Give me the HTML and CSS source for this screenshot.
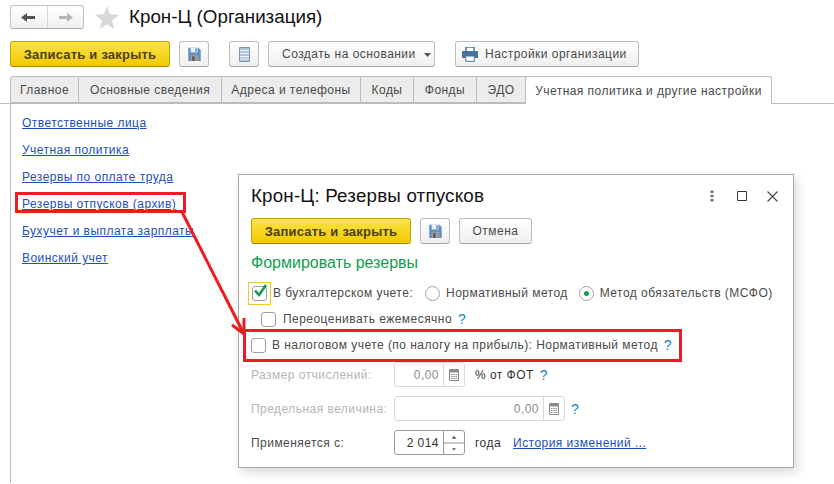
FILE: index.html
```html
<!DOCTYPE html>
<html lang="ru">
<head>
<meta charset="utf-8">
<title>Крон-Ц (Организация)</title>
<link rel="stylesheet" href="styles.css">
</head>
<body>
<svg width="0" height="0" class="defs">
  <symbol id="save" viewBox="0 0 16 18">
    <path d="M0 1h13l3 3v14H0z" fill="#5d8fc4"/>
    <path d="M3 1h9v6H3z" fill="#e9f1f8"/>
    <path d="M9 2h2v4H9z" fill="#5d8fc4"/>
    <path d="M3 10h10v8H3z" fill="#9a9a9a"/>
    <path d="M5 12h3v6H5z" fill="#555"/>
  </symbol>
  <symbol id="calc" viewBox="0 0 10 12">
    <path d="M.5.5h9v11h-9z" fill="#fff" stroke="#8a8a8a"/>
    <path d="M1 1h8v2.500H1z" fill="#8a8a8a"/>
    <path d="M2 5h1.500v1H2zM4.300 5h1.500v1H4.300zM6.600 5h1.500v1H6.600zM2 7h1.500v1H2zM4.300 7h1.500v1H4.300zM6.600 7h1.500v1H6.600zM2 9h1.500v1H2zM4.300 9h1.500v1H4.300zM6.600 9h1.500v1H6.600z" fill="#8a8a8a"/>
  </symbol>
</svg>

<div class="head">
  <div class="nav">
    <span class="nav-btn">
      <svg width="15" height="11" viewBox="0 0 15 11"><path d="M0 5.500 6 1v3h8v3H6v3z" fill="#555"/></svg>
    </span>
    <span class="nav-btn">
      <svg width="15" height="11" viewBox="0 0 15 11"><path d="M15 5.500 9 1v3H1v3h8v3z" fill="#b5b5b5"/></svg>
    </span>
  </div>
  <svg class="star" width="24" height="23" viewBox="0 0 24 23"><path d="m12 0 3.200 8.300 8.800.5-6.900 5.600 2.300 8.600L12 18.200 4.600 23l2.300-8.600L0 8.800l8.800-.5z" fill="#d8d8d8"/></svg>
  <h1 class="title">Крон-Ц (Организация)</h1>
</div>

<div class="toolbar">
  <button class="btn btn-primary btn-wide">Записать и закрыть</button>
  <button class="btn btn-icon"><svg width="13" height="14"><use href="#save"/></svg></button>
  <button class="btn btn-icon btn-list">
    <svg width="11" height="15" viewBox="0 0 11 15"><path d="M.5.500h10v14H.5z" fill="#a9c4dc" stroke="#7b97b0"/><path d="M1 3.500h9M1 6.500h9M1 9.500h9M1 12h9" stroke="#f2f6fa"/></svg>
  </button>
  <button class="btn btn-create">Создать на основании<svg class="caret" width="7" height="4" viewBox="0 0 7 4"><path d="M0 0h7L3.500 4z" fill="#555"/></svg></button>
  <button class="btn btn-settings">
    <svg width="16" height="15" viewBox="0 0 16 15"><path d="M4 0h8v5H4z" fill="#fff" stroke="#46749f" stroke-width="1.500"/><path d="M1 4h14a1 1 0 0 1 1 1v6h-3V9H3v2H0V5a1 1 0 0 1 1-1z" fill="#46749f"/><path d="M3.700 9h8.600v5.300H3.700z" fill="#fff" stroke="#46749f"/></svg>
    Настройки организации
  </button>
</div>

<div class="tabs">
  <span class="tab tab-1">Главное</span>
  <span class="tab tab-2">Основные сведения</span>
  <span class="tab tab-3">Адреса и телефоны</span>
  <span class="tab tab-4">Коды</span>
  <span class="tab tab-5">Фонды</span>
  <span class="tab tab-6">ЭДО</span>
  <span class="tab tab-active">Учетная политика и другие настройки</span>
</div>

<main class="panel">
  <a class="link side-link" href="#">Ответственные лица</a>
  <a class="link side-link" href="#">Учетная политика</a>
  <a class="link side-link" href="#">Резервы по оплате труда</a>
  <a class="link side-link" href="#">Резервы отпусков (архив)</a>
  <a class="link side-link" href="#">Бухучет и выплата зарплаты</a>
  <a class="link side-link" href="#">Воинский учет</a>
</main>

<section class="dialog">
  <div class="dialog-head">
    <h2 class="dialog-title">Крон-Ц: Резервы отпусков</h2>
    <svg class="win-more" width="4" height="12" viewBox="0 0 4 12"><path d="M.5.500h3v2.500h-3zM.5 4.800h3v2.500h-3zM.5 9h3v2.500h-3z" fill="#707070"/></svg>
    <svg class="win-max" width="10" height="10" viewBox="0 0 10 10"><path d="M.5.500h9v9h-9z" fill="none" stroke="#333"/></svg>
    <svg class="win-close" width="11" height="11" viewBox="0 0 11 11"><path d="m.5.500 10 10m0-10-10 10" fill="none" stroke="#444" stroke-width="1.100"/></svg>
  </div>
  <div class="dialog-tools">
    <button class="btn btn-primary btn-wide">Записать и закрыть</button>
    <button class="btn btn-icon"><svg width="13" height="14"><use href="#save"/></svg></button>
    <button class="btn btn-cancel">Отмена</button>
  </div>
  <div class="section-title">Формировать резервы</div>

  <div class="row row-acc">
    <span class="focus"><span class="check">
      <svg width="15" height="14" viewBox="0 0 15 14"><path d="m2 6.500 4 4.500L13 1" fill="none" stroke="#0f9a50" stroke-width="2.600"/></svg>
    </span></span>
    <span class="lbl lbl-acc">В бухгалтерском учете:</span>
    <span class="radio"></span>
    <span class="lbl lbl-norm">Нормативный метод</span>
    <span class="radio radio-on"></span>
    <span class="lbl">Метод обязательств (МСФО)</span>
  </div>
  <div class="row row-reval">
    <span class="check"></span>
    <span class="lbl lbl-reval">Переоценивать ежемесячно</span>
    <span class="hint hint-reval">?</span>
  </div>
  <div class="row row-tax">
    <span class="check"></span>
    <span class="lbl lbl-tax">В налоговом учете (по налогу на прибыль): Нормативный метод</span>
    <span class="hint hint-tax">?</span>
  </div>
  <div class="row row-field row-size">
    <span class="field-label muted">Размер отчислений:</span>
    <span class="input input-short input-off"><span class="val">0,00</span><span class="addon"><svg width="10" height="12"><use href="#calc"/></svg></span></span>
    <span class="lbl lbl-after">% от ФОТ</span>
    <span class="hint hint-fot">?</span>
  </div>
  <div class="row row-field row-limit">
    <span class="field-label muted">Предельная величина:</span>
    <span class="input input-long input-off"><span class="val">0,00</span><span class="addon"><svg width="10" height="12"><use href="#calc"/></svg></span></span>
    <span class="hint hint-limit">?</span>
  </div>
  <div class="row row-field row-from">
    <span class="field-label">Применяется с:</span>
    <span class="input input-short input-on"><span class="val val-dark">2 014</span><span class="addon spin"><svg width="21" height="24" viewBox="0 0 21 24"><path d="M0 12h21" stroke="#8e8e8e"/><path d="m8 7.500 2.500-3 2.500 3z" fill="#555"/><path d="m8.500 17.500 2 2.500 2-2.500z" fill="#555"/></svg></span></span>
    <span class="lbl lbl-after">года</span>
    <a class="link history" href="#">История изменений ...</a>
  </div>
</section>

<svg class="marks" width="834" height="484" viewBox="0 0 834 484">
  <g fill="none" stroke="#ed1c24" stroke-width="3">
    <path d="M16.500 193.500h168v18h-168z"/>
    <path d="M244.500 330.500h436v30h-436z"/>
    <path d="m182 212 62 122"/>
    <path d="m232 325 12 9M244 318v17"/>
  </g>
</svg>
</body>
</html>
```
FILE: styles.css
```css
* { box-sizing: border-box; }
html, body { margin: 0; padding: 0; }
body {
  position: relative;
  width: 834px;
  height: 484px;
  overflow: hidden;
  background: #fff;
  font: 12px "Liberation Sans", Arial, sans-serif;
  letter-spacing: .46px;
  color: #4a4a4a;
}
.defs { position: absolute; }

.head {
  display: flex;
  align-items: center;
  height: 41px;
  padding: 0 0 7px 10px;
}
.nav {
  display: flex;
  width: 74px;
  height: 24px;
  border: 1px solid #c2c2c2;
  border-bottom-color: #a9a9a9;
  border-radius: 3px;
  background: linear-gradient(#fff, #f0f0f0);
}
.nav-btn {
  flex: 1;
  display: flex;
  align-items: center;
  justify-content: center;
}
.nav-btn + .nav-btn { border-left: 1px solid #d6d6d6; }
.star { margin-left: 11px; }
.title {
  margin: 0 0 0 10px;
  font-size: 18.8px;
  font-weight: 400;
  letter-spacing: 0;
  color: #111;
}

.toolbar {
  display: flex;
  height: 26px;
  padding-left: 10px;
}
.btn {
  display: flex;
  align-items: center;
  justify-content: center;
  height: 26px;
  padding: 0;
  border: 1px solid #bdbdbd;
  border-bottom-color: #a5a5a5;
  border-radius: 3px;
  background: linear-gradient(#fff, #efefef);
  font: inherit;
  letter-spacing: inherit;
  color: inherit;
}
.btn-primary {
  border-color: #c2a400 #c2a400 #a08800;
  background: linear-gradient(#fbe44a, #f2c900);
  font-size: 13px;
  font-weight: 700;
  letter-spacing: .2px;
  color: #4a3f10;
}
.btn-wide { width: 160px; }
.btn-icon { width: 30px; margin-left: 9px; }
.btn-list { margin-left: 20px; }
.btn-create {
  justify-content: flex-start;
  width: 167px;
  margin-left: 9px;
  padding-left: 13px;
  gap: 8px;
}
.btn-settings {
  justify-content: flex-start;
  width: 184px;
  margin-left: 20px;
  padding-left: 6px;
  gap: 7px;
}
.caret { margin-top: 1px; }

.tabs {
  display: flex;
  height: 28px;
  margin-top: 9px;
  padding-left: 10px;
  border-bottom: 1px solid #bcbcbc;
}
.tab {
  display: flex;
  align-items: center;
  justify-content: center;
  height: 27px;
  border: 1px solid #bcbcbc;
  border-left-width: 0;
  background: #ececec;
}
.tab-1 { width: 69px; border-left-width: 1px; border-top-left-radius: 3px; }
.tab-2 { width: 143px; }
.tab-3 { width: 139px; }
.tab-4 { width: 53px; }
.tab-5 { width: 63px; }
.tab-6 { width: 49px; }
.tab-active {
  width: 246px;
  height: 28px;
  background: #fff;
  border-bottom: 0;
  border-top-right-radius: 3px;
}

.panel {
  display: flex;
  flex-direction: column;
  align-items: flex-start;
  gap: 12px;
  height: 379px;
  margin-left: 10px;
  padding: 12px 0 0 11px;
  border-left: 1px solid #bcbcbc;
}
.link {
  color: #1c50b8;
  text-decoration: underline;
}
.side-link { line-height: 15px; }

.dialog {
  position: absolute;
  left: 238px;
  top: 174px;
  width: 556px;
  height: 294px;
  padding: 0 12px;
  background: #fff;
  border: 1px solid #a8a8a8;
  box-shadow: 3px 4px 10px rgba(0, 0, 0, .16);
}
.dialog-head {
  display: flex;
  align-items: center;
  height: 43px;
  padding-bottom: 1px;
}
.dialog-title {
  flex: 1;
  margin: 0;
  font-size: 18.8px;
  font-weight: 400;
  letter-spacing: .18px;
  color: #111;
}
.win-max { margin-left: 23px; }
.win-close { margin: 0 3px 0 20px; }
.dialog-tools { display: flex; }
.btn-cancel { width: 73px; margin-left: 9px; }
.section-title {
  margin-top: 10px;
  font-size: 16px;
  line-height: 18px;
  letter-spacing: 0;
  color: #10a050;
}

.row { display: flex; align-items: center; }
.row-acc { height: 24px; margin: 9px 0 0 -3px; }
.row-reval { height: 16px; margin: 6px 0 0 10px; }
.row-tax { height: 16px; margin: 10px 0 0 0; }
.row-field { height: 25px; }
.row-size { margin-top: 9px; }
.row-limit { margin-top: 9px; }
.row-from { margin-top: 9px; }

.focus {
  flex: none;
  display: flex;
  align-items: center;
  justify-content: center;
  width: 23px;
  height: 23px;
  border: 1px solid #f0c92a;
}
.check {
  position: relative;
  display: block;
  flex: none;
  width: 15px;
  height: 15px;
  border: 1px solid #a0a0a0;
  border-radius: 3px;
  background: #fff;
}
.check svg { position: absolute; left: 0; top: -3px; }
.lbl { white-space: nowrap; }
.lbl-acc { margin: 0 12px 0 2px; }
.radio {
  position: relative;
  flex: none;
  width: 15px;
  height: 15px;
  border: 1px solid #a0a0a0;
  border-radius: 50%;
  background: #fff;
}
.radio-on::after {
  content: "";
  position: absolute;
  left: 4px;
  top: 4px;
  width: 5px;
  height: 5px;
  border-radius: 50%;
  background: #10a050;
}
.lbl-norm { margin: 0 11px 0 6px; }
.radio + .lbl { margin-left: 6px; }
.lbl-reval { margin-left: 7px; }
.lbl-tax { margin-left: 6px; }
.hint {
  font-size: 14px;
  font-weight: 400;
  color: #1a82c4;
}
.hint-reval { margin-left: 6px; }
.hint-tax { margin-left: 6px; }
.hint-fot { margin-left: 6px; }
.hint-limit { margin-left: 6px; }

.muted { color: #b5b5b5; }
.field-label { flex: none; width: 143px; white-space: nowrap; }
.input {
  display: flex;
  align-items: stretch;
  height: 25px;
  border: 1px solid #d8d8d8;
  border-radius: 3px;
  background: #fff;
}
.input-short { width: 71px; }
.input-long { width: 171px; }
.input-on { border-color: #9a9a9a; }
.val {
  flex: 1;
  display: flex;
  align-items: center;
  justify-content: flex-end;
  padding-right: 4px;
  color: #8d8d8d;
}
.val-dark { color: #333; }
.addon {
  flex: none;
  display: flex;
  align-items: center;
  justify-content: center;
  width: 21px;
  border-left: 1px solid #d8d8d8;
}
.spin { border-left-color: #9a9a9a; }
.lbl-after { margin-left: 10px; color: #333; }
.history { margin-left: 12px; }

.marks {
  position: absolute;
  left: 0;
  top: 0;
  pointer-events: none;
}
```
